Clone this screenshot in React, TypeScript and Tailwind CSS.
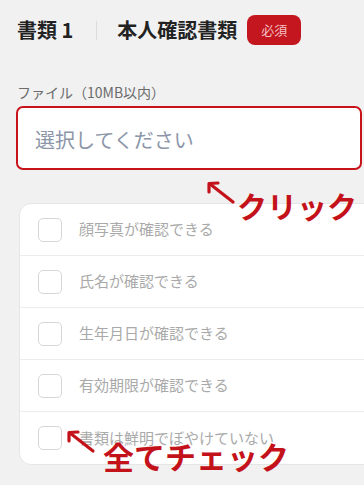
const CHECKS = [
  "顔写真が確認できる",
  "氏名が確認できる",
  "生年月日が確認できる",
  "有効期限が確認できる",
  "書類は鮮明でぼやけていない",
] as const;

function Arrow({ className }: { className: string }) {
  return (
    <svg className={className} width="30" height="24" viewBox="0 0 30 24" fill="none">
      <path d="M27 21 L4 3" stroke="#c4121a" strokeWidth="3.2" strokeLinecap="round" />
      <path d="M3 11 L3 2.5 L12 2" stroke="#c4121a" strokeWidth="3.2" strokeLinecap="round" strokeLinejoin="round" />
    </svg>
  );
}

export default function App() {
  return (
    <div
      className="relative w-[364px] h-[485px] overflow-hidden bg-[#f1f1f1] pl-[17px] pt-[15px]"
      style={{ fontFamily: '"Noto Sans CJK JP", "Noto Sans", sans-serif' }}
    >
      {/* ── Title ─────────────────── */}
      <div className="flex items-center h-[30px]">
        <span className="text-[20px] font-bold text-[#222] leading-none">書類 1</span>
        <span className="ml-[23px] mr-[20px] w-px h-[19px] bg-[#dcdcdc]" />
        <span className="text-[20px] font-bold text-[#222] leading-none">本人確認書類</span>
        <span className="ml-[10px] flex items-center justify-center w-[54px] h-[30px] rounded-[8px] bg-[#c4161e] text-[13px] text-[#f3c0c3]">
          必須
        </span>
      </div>

      {/* ── File input ────────────── */}
      <p className="mt-[39px] text-[14px] leading-[17px] text-[#6b6b6b]">ファイル（10MB以内）</p>
      <div className="mt-[5px] -ml-px flex items-center w-[346px] h-[64px] rounded-[7px] border-2 border-[#c8131b] bg-white pl-[17px] pt-[4px]">
        <span className="text-[20px] text-[#8c96a8]">選択してください</span>
      </div>

      {/* ── Checklist ─────────────── */}
      <div className="mt-[33px] ml-[2px] w-[360px] rounded-[12px] border border-[#e6e6e6] bg-white">
        {CHECKS.map((label, i) => (
          <div
            key={label}
            className={`flex items-center h-[52px] pl-[18px] ${i < CHECKS.length - 1 ? "border-b border-[#ececec]" : ""}`}
          >
            <span className="w-[24px] h-[24px] rounded-[5px] border-[1.5px] border-[#d6d6d6] bg-white" />
            <span className="ml-[17px] text-[15px] text-[#a9a9a9]">{label}</span>
          </div>
        ))}
      </div>

      {/* ── Annotations ───────────── */}
      <Arrow className="absolute left-[206px] top-[181px]" />
      <span className="absolute left-[237px] top-[190px] text-[30px] font-bold leading-none text-[#c4121a]">
        クリック
      </span>
      <Arrow className="absolute left-[66px] top-[430px]" />
      <span className="absolute left-[103px] top-[440px] text-[31px] font-bold leading-none text-[#c4121a]">
        全てチェック
      </span>
    </div>
  );
}
